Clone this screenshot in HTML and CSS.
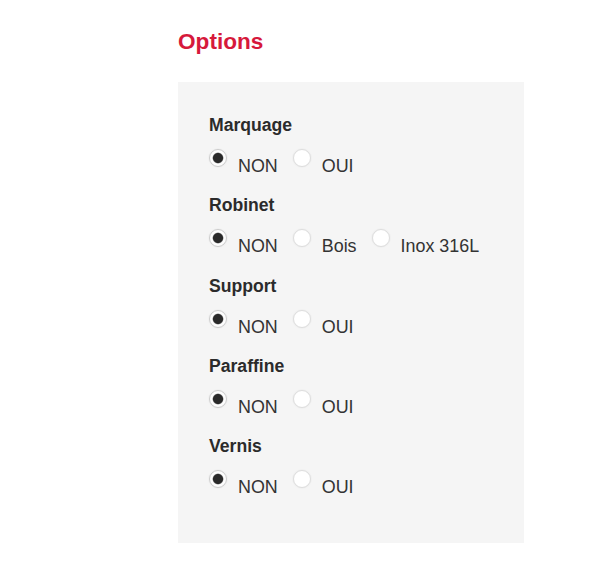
FILE: index.html
```html
<!DOCTYPE html>
<html lang="fr">
<head>
<meta charset="utf-8">
<title>Options</title>
<link rel="stylesheet" href="styles.css">
</head>
<body>
<div class="wrap">
  <h2 class="title">Options</h2>
  <div class="panel">
    <div class="group">
      <div class="group-label">Marquage</div>
      <div class="choices">
        <label class="choice"><input type="radio" name="marquage" checked><span>NON</span></label>
        <label class="choice"><input type="radio" name="marquage"><span>OUI</span></label>
      </div>
    </div>
    <div class="group">
      <div class="group-label">Robinet</div>
      <div class="choices">
        <label class="choice"><input type="radio" name="robinet" checked><span>NON</span></label>
        <label class="choice"><input type="radio" name="robinet"><span>Bois</span></label>
        <label class="choice"><input type="radio" name="robinet"><span>Inox 316L</span></label>
      </div>
    </div>
    <div class="group">
      <div class="group-label">Support</div>
      <div class="choices">
        <label class="choice"><input type="radio" name="support" checked><span>NON</span></label>
        <label class="choice"><input type="radio" name="support"><span>OUI</span></label>
      </div>
    </div>
    <div class="group">
      <div class="group-label">Paraffine</div>
      <div class="choices">
        <label class="choice"><input type="radio" name="paraffine" checked><span>NON</span></label>
        <label class="choice"><input type="radio" name="paraffine"><span>OUI</span></label>
      </div>
    </div>
    <div class="group">
      <div class="group-label">Vernis</div>
      <div class="choices">
        <label class="choice"><input type="radio" name="vernis" checked><span>NON</span></label>
        <label class="choice"><input type="radio" name="vernis"><span>OUI</span></label>
      </div>
    </div>
  </div>
</div>
</body>
</html>
```
FILE: styles.css
```css
* { box-sizing: border-box; }
html, body {
  margin: 0;
  padding: 0;
  background: #fff;
}
body {
  font-family: "Liberation Sans", Arial, sans-serif;
  color: #333;
}
.wrap {
  margin-left: 178px;
  width: 346px;
  padding-top: 29px;
}
.title {
  margin: 0;
  font-size: 22.6px;
  line-height: 26px;
  font-weight: bold;
  color: #d6193b;
}
.panel {
  margin-top: 27px;
  background: #f5f5f5;
  padding: 31px 20px 44px 31px;
}
.group + .group {
  margin-top: 15.25px;
}
.group-label {
  font-size: 17.6px;
  line-height: 24px;
  font-weight: bold;
  color: #2b2b2b;
}
.choices {
  display: flex;
  align-items: flex-start;
  margin-top: 12px;
}
.choice {
  display: flex;
  align-items: flex-start;
  margin-right: 15px;
  cursor: pointer;
}
.choice span {
  font-size: 17.9px;
  line-height: 24px;
  padding-top: 5px;
  color: #333;
}
.choice input {
  -webkit-appearance: none;
  appearance: none;
  margin: 0 11px 0 0;
  width: 18px;
  height: 18px;
  border-radius: 50%;
  border: 1px solid #dedede;
  background: #fff;
  box-shadow: 0 0 2px rgba(0,0,0,0.08);
}
.choice input:checked {
  border-color: #cccccc;
  background: radial-gradient(circle, #2a2a2a 0, #2a2a2a 4.6px, #fdfdfd 5.8px);
}
```
